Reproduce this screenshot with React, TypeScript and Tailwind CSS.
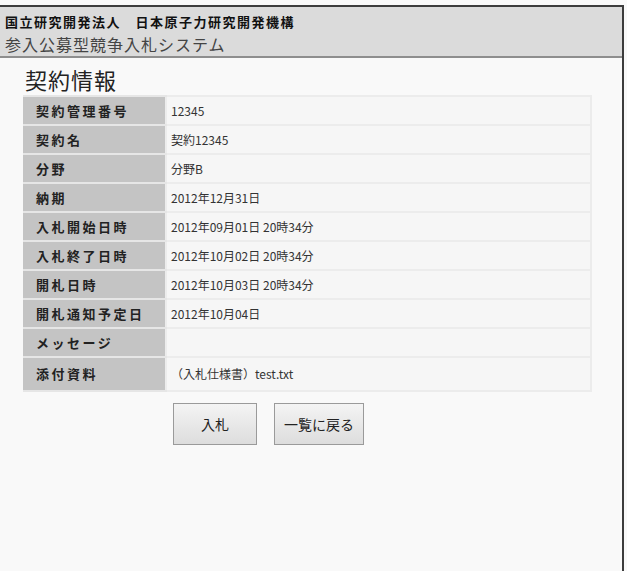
const rows: [string, string][] = [
  ["契約管理番号", "12345"],
  ["契約名", "契約12345"],
  ["分野", "分野B"],
  ["納期", "2012年12月31日"],
  ["入札開始日時", "2012年09月01日 20時34分"],
  ["入札終了日時", "2012年10月02日 20時34分"],
  ["開札日時", "2012年10月03日 20時34分"],
  ["開札通知予定日", "2012年10月04日"],
  ["メッセージ", ""],
  ["添付資料", "（入札仕様書）test.txt"],
];

const App = () => {
  return (
    <div
      className="w-[627px] h-[571px] bg-[#f9f9f9] pt-[5px] overflow-hidden"
      style={{ fontFamily: '"Noto Sans CJK JP", "Liberation Sans", sans-serif' }}
    >
      <div className="w-[624px] h-[566px] border-t-2 border-r-2 border-[#3c3c3c] flex flex-col">
        {/* header */}
        <div className="h-[51px] bg-[#dbdbdb] border-b-2 border-[#8e8e8e] px-[5px] pt-[7px]">
          <div className="text-[13px] leading-[16px] font-bold text-[#111] tracking-[1.5px]">
            国立研究開発法人　日本原子力研究開発機構
          </div>
          <div className="text-[16px] leading-[22px] text-[#444] mt-[3px] tracking-[1px]">参入公募型競争入札システム</div>
        </div>

        <div className="pl-[23px] pr-[30px]">
          <h1 className="text-[22px] leading-[26px] text-[#222] pl-[2px] pt-[8px] pb-[3px] tracking-[1px]">契約情報</h1>

          <table className="w-[569px] border-collapse">
            <tbody>
              {rows.map(([label, value], i) => (
                <tr key={label} className={i === rows.length - 1 ? "h-[34px]" : "h-[29px]"}>
                  <td className="w-[143px] bg-[#c4c4c4] border-y-2 border-[#e6e6e6] pl-[13px] text-[13px] font-bold text-[#222] tracking-[2.5px]">
                    {label}
                  </td>
                  <td className="bg-[#f6f6f6] border-2 border-[#ececec] pl-[4px] text-[12px] text-[#333]">
                    {value}
                  </td>
                </tr>
              ))}
            </tbody>
          </table>

          <div className="flex gap-[17px] pl-[150px] mt-[11px]">
            <button className="w-[84px] h-[42px] border border-[#9a9a9a] bg-gradient-to-b from-[#f4f4f4] to-[#dddddd] text-[14px] text-[#222]">
              入札
            </button>
            <button className="w-[90px] h-[42px] border border-[#9a9a9a] bg-gradient-to-b from-[#f4f4f4] to-[#dddddd] text-[14px] text-[#222]">
              一覧に戻る
            </button>
          </div>
        </div>
      </div>
    </div>
  );
};

export default App;
